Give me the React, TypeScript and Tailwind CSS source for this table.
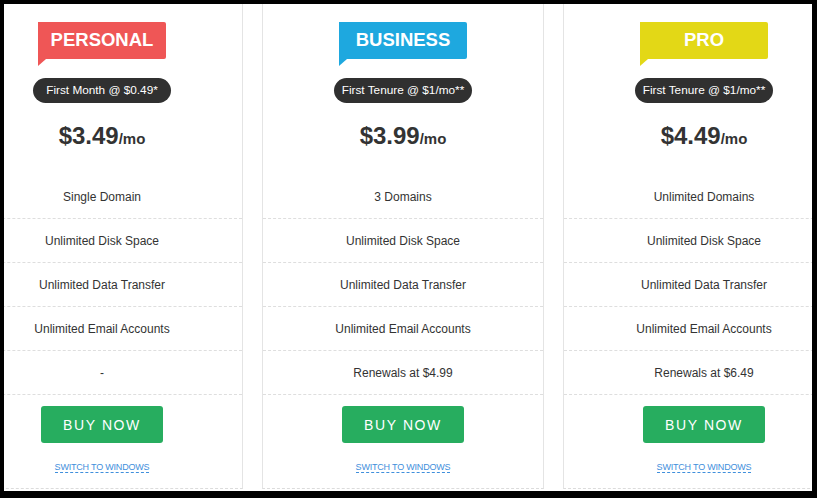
import React from "react";

type Plan = {
  name: string;
  color: string;
  badge: string;
  price: string;
  features: string[];
};

const plans: Plan[] = [
  {
    name: "PERSONAL",
    color: "#ef5656",
    badge: "First Month @ $0.49*",
    price: "$3.49",
    features: ["Single Domain", "Unlimited Disk Space", "Unlimited Data Transfer", "Unlimited Email Accounts", "-"],
  },
  {
    name: "BUSINESS",
    color: "#1ea8df",
    badge: "First Tenure @ $1/mo**",
    price: "$3.99",
    features: ["3 Domains", "Unlimited Disk Space", "Unlimited Data Transfer", "Unlimited Email Accounts", "Renewals at $4.99"],
  },
  {
    name: "PRO",
    color: "#e3d816",
    badge: "First Tenure @ $1/mo**",
    price: "$4.49",
    features: ["Unlimited Domains", "Unlimited Disk Space", "Unlimited Data Transfer", "Unlimited Email Accounts", "Renewals at $6.49"],
  },
];

function Card({ plan }: { plan: Plan }) {
  return (
    <div className="w-[282px] shrink-0 border-x border-b border-x-[#e4e4e4] border-b-[#dcdcdc] flex flex-col items-center pt-[18px] h-[485px]" style={{ borderBottomStyle: "dashed" }}>
      <div className="relative w-[128px] h-[37px] rounded-tr-[2px] rounded-br-[2px] flex items-center justify-center text-white font-bold text-[18.5px] leading-none" style={{ backgroundColor: plan.color }}>
        {plan.name}
        <span
          className="absolute left-0 top-full w-0 h-0 border-r-[8px] border-r-transparent border-t-[7px]"
          style={{ borderTopColor: plan.color }}
        />
      </div>
      <div className="mt-[19px] w-[138px] h-[25px] rounded-full bg-[#303030] text-white text-[11.8px] flex items-center justify-center leading-none">
        {plan.badge}
      </div>
      <div className="mt-[19px] h-[28px] leading-[28px] text-[#333] font-bold">
        <span className="text-[24px]">{plan.price}</span>
        <span className="text-[15px]">/mo</span>
      </div>
      <div className="mt-[25px] w-full flex flex-col">
        {plan.features.map((f, i) => (
          <div
            key={i}
            className="h-[44px] w-full flex items-center justify-center text-[12px] text-[#333] border-b border-[#dedede]"
            style={{ borderBottomStyle: "dashed" }}
          >
            {f}
          </div>
        ))}
      </div>
      <button className="mt-[11px] w-[122px] h-[37px] rounded-[3px] bg-[#27ad5f] text-white text-[14px] tracking-[1.6px] flex items-center justify-center leading-none">
        BUY NOW
      </button>
      <a
        className="mt-[19px] text-[9px] text-[#3f8fdc] leading-[10px] tracking-[-0.2px] border-b border-[#3f8fdc] cursor-pointer"
        style={{ borderBottomStyle: "dashed" }}
      >
        SWITCH TO WINDOWS
      </a>
    </div>
  );
}

export default function App() {
  return (
    <div className="w-[817px] h-[498px] bg-black pt-[4px] pl-[4px] pr-[5px] pb-[7px]" style={{ fontFamily: '"Liberation Sans", Arial, sans-serif' }}>
      <div className="w-full h-full bg-white overflow-hidden">
        <div className="flex gap-[19px] ml-[-43px]">
          {plans.map((p) => (
            <Card key={p.name} plan={p} />
          ))}
        </div>
      </div>
    </div>
  );
}
